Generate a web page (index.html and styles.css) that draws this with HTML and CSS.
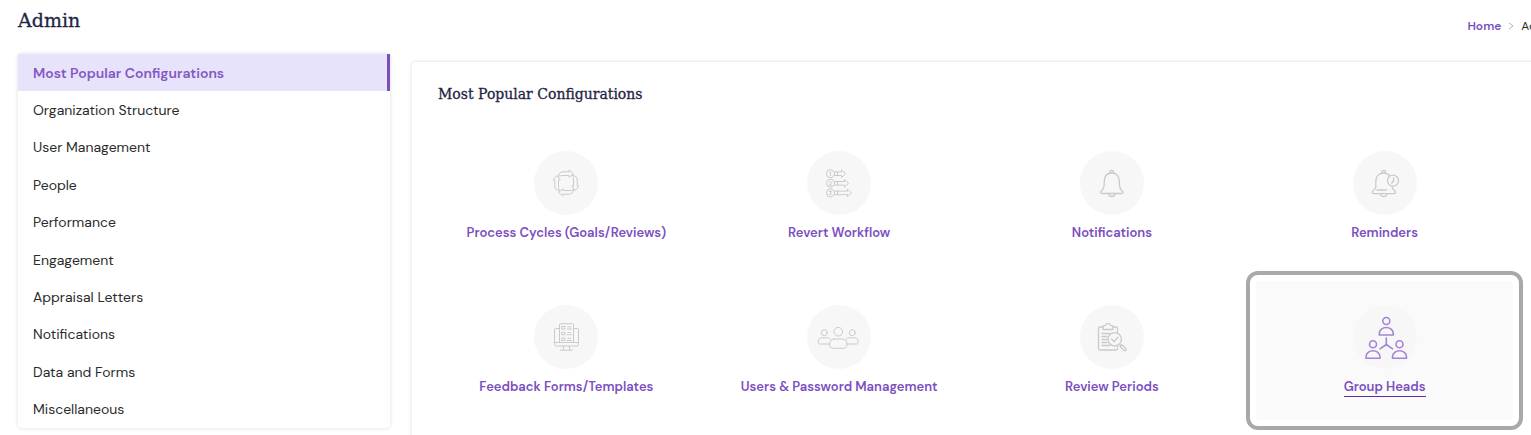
FILE: index.html
```html
<!DOCTYPE html>
<html lang="en">
<head>
    <meta charset="UTF-8">
    <meta name="viewport" content="width=device-width, initial-scale=1.0">
    <title>Admin</title>
    <link rel="stylesheet" href="styles.css">
</head>
<body>
    <div class="page">
        <header class="page-header">
            <h1>Admin</h1>
            <nav class="breadcrumb" aria-label="Breadcrumb">
                <a href="#">Home</a>
                <svg class="breadcrumb-arrow" viewBox="0 0 6 8"><path d="M1 1l4 3-4 3"/></svg>
                <span>Admin</span>
            </nav>
        </header>

        <div class="content">
            <nav class="sidebar" aria-label="Configurations">
                <ul class="menu">
                    <li><a class="active" href="#">Most Popular Configurations</a></li>
                    <li><a href="#">Organization Structure</a></li>
                    <li><a href="#">User Management</a></li>
                    <li><a href="#">People</a></li>
                    <li><a href="#">Performance</a></li>
                    <li><a href="#">Engagement</a></li>
                    <li><a href="#">Appraisal Letters</a></li>
                    <li><a href="#">Notifications</a></li>
                    <li><a href="#">Data and Forms</a></li>
                    <li><a href="#">Miscellaneous</a></li>
                </ul>
            </nav>

            <main class="panel">
                <h2>Most Popular Configurations</h2>

                <div class="tiles">
                    <a class="tile" href="#">
                        <svg class="icon" viewBox="0 0 64 64">
                            <defs>
                                <path id="cycle-arrow" d="M24.500 25c0-2.500 2-4.200 4.500-4.200h6V19l4.500 3.700-4.500 3.600v-1.800h-6c-2 0-2.500.5-4.500.5z"/>
                            </defs>
                            <use href="#cycle-arrow"/>
                            <use href="#cycle-arrow" transform="rotate(90 32 32)"/>
                            <use href="#cycle-arrow" transform="rotate(180 32 32)"/>
                            <use href="#cycle-arrow" transform="rotate(270 32 32)"/>
                        </svg>
                        <span class="label">Process Cycles (Goals/Reviews)</span>
                    </a>

                    <a class="tile" href="#">
                        <svg class="icon" viewBox="0 0 64 64">
                            <circle cx="23.500" cy="22.700" r="4"/>
                            <circle cx="23.500" cy="32.300" r="4"/>
                            <circle cx="23.500" cy="41.900" r="4"/>
                            <path d="M27.500 20.900h7v-2l4 3.800-4 3.800v-2h-7M30.500 21v3.500"/>
                            <path d="M27.500 30.500h10v-2l4 3.800-4 3.800v-2h-10M30.500 30.500v3.600"/>
                            <path d="M27.500 40.100h13v-2l4 3.800-4 3.800v-2h-13M30.500 40.100v3.600"/>
                            <path d="M22.800 21.500l.8-.6v3.600M22.300 31.200c1-1.200 3-.2 1.800 1.200l-1.800 1.800h2.600M22.300 40.300h2.300l-1.200 1.400c2 0 1.600 2.300-1.100 1.800"/>
                        </svg>
                        <span class="label">Revert Workflow</span>
                    </a>

                    <a class="tile" href="#">
                        <svg class="icon icon-bold" viewBox="0 0 64 64">
                            <path d="M30 22c-1-3.500 4.500-3.500 3.500 0"/>
                            <path d="M31.800 22c-5 0-7.500 3.500-7.500 8.500 0 6-.8 7.500-3.300 10-.8.9-.5 2 .7 2h20.200c1.200 0 1.500-1.100.7-2-2.500-2.500-3.300-4-3.300-10 0-5-2.500-8.500-7.500-8.500z"/>
                            <path d="M28.500 42.500c.3 4 6.300 4 6.600 0"/>
                        </svg>
                        <span class="label">Notifications</span>
                    </a>

                    <a class="tile" href="#">
                        <svg class="icon icon-bold" viewBox="0 0 64 64">
                            <path d="M29 22c-1-3.500 4.500-3.500 3.500 0"/>
                            <path d="M36.500 24.500c-1.500-1.600-3.500-2.500-5.700-2.500-5 0-8 3.500-8 8.500V36c0 1.500-.8 2.300-2.300 3.200-1.800 1-1.500 3.500.5 3.500h19.800c2 0 2.300-2.500.5-3.500-1.500-.9-2.300-1.700-2.300-3.500"/>
                            <circle cx="40" cy="29.700" r="5.500"/>
                            <path d="M40.500 27v3l-1.700 2M24 39h9.500M27.500 42.700c.3 3.800 6.300 3.800 6.600 0"/>
                        </svg>
                        <span class="label">Reminders</span>
                    </a>

                    <a class="tile" href="#">
                        <svg class="icon" viewBox="0 0 64 64">
                            <path d="M25.500 23.500H22c-1 0-1.500.5-1.500 1.500v14.500c0 1 .5 1.500 1.500 1.500h21c1 0 1.500-.5 1.500-1.500V25c0-1-.5-1.500-1.500-1.500h-3.500M20.500 37.500h24"/>
                            <path d="M25.500 37.500V20c0-1 .5-1.300 1.300-1.300h11.400c.8 0 1.300.3 1.300 1.300v17.500"/>
                            <path d="M28 21.500h3v2.500h-3zM28 27.300h3v2.500h-3zM28 33h3v2.500h-3zM33 24h4.500M33 29.700h4.500M33 35.500h4.500M34 21.800h2.500M34 27.500h2.500M34 33.300h2.500"/>
                            <path d="M30 41l-1 4M35 41l1 4M26.500 45.200h12"/>
                        </svg>
                        <span class="label">Feedback Forms/Templates</span>
                    </a>

                    <a class="tile" href="#">
                        <svg class="icon" viewBox="0 0 64 64">
                            <circle cx="31.300" cy="26.700" r="4.300"/>
                            <circle cx="17.300" cy="27.700" r="3"/>
                            <circle cx="45.300" cy="27.700" r="3"/>
                            <path d="M27.300 34h8c3.200 0 4.700 2.500 4.700 5.500 0 2.800-1.500 3.800-4 3.800h-9.400c-2.500 0-4-1-4-3.800 0-3 1.500-5.500 4.700-5.500z"/>
                            <path d="M23.500 34.500c-.5-1.200-1.500-1.700-2.700-1.700h-6c-2.200 0-3.500 1.500-3.500 3.500v1c0 1.200.6 1.700 1.700 1.700h9.500M39 34.500c.5-1.200 1.500-1.700 2.700-1.700h6c2.200 0 3.500 1.500 3.500 3.500v1c0 1.200-.6 1.700-1.700 1.700H40"/>
                        </svg>
                        <span class="label">Users &amp; Password Management</span>
                    </a>

                    <a class="tile" href="#">
                        <svg class="icon icon-bold" viewBox="0 0 64 64">
                            <path d="M23 22h-3c-1 0-1.500.5-1.500 1.500v20c0 1 .5 1.500 1.500 1.500h16c1 0 1.500-.5 1.500-1.500V41M37.500 27.500v-4c0-1-.5-1.500-1.500-1.500h-3"/>
                            <path d="M23 24.500v-3c0-1 .7-1.200 2.500-1.200.5-2.300 4.500-2.300 5 0 1.800 0 2.500.2 2.500 1.200v3z"/>
                            <path d="M22 28.500h7.500M22 31.500h5M22 34.500h5M22 37.500h5M22 40.500h8"/>
                            <circle cx="34.700" cy="34.300" r="6.700"/>
                            <path d="M31.500 34l2.500 2.500 4-4.300M39.500 39.200l1 1M40 41.500l1.800-1.800 4 3.700c1.300 1.300-.6 3.200-1.900 1.900z"/>
                        </svg>
                        <span class="label">Review Periods</span>
                    </a>

                    <a class="tile selected" href="#">
                        <svg class="icon" viewBox="0 0 64 64">
                            <circle cx="33.300" cy="16" r="3.500"/>
                            <path d="M26.300 30v-1.200c0-8.400 14-8.400 14 0V30z"/>
                            <circle cx="20" cy="39.300" r="3.500"/>
                            <path d="M13 53.300v-1.200c0-8.400 14-8.400 14 0v1.200z"/>
                            <circle cx="46.500" cy="39.300" r="3.500"/>
                            <path d="M39.500 53.300v-1.200c0-8.400 14-8.400 14 0v1.200z"/>
                            <path d="M33.300 33v6.500L27 43.800M33.300 39.500l6.300 4.300"/>
                        </svg>
                        <span class="label">Group Heads</span>
                    </a>
                </div>
            </main>
        </div>
    </div>
</body>
</html>
```
FILE: styles.css
```css
* {
    margin: 0;
    padding: 0;
    box-sizing: border-box;
}

body {
    font-family: 'DM Sans', Inter, sans-serif;
    font-size: 14px;
    line-height: 20px;
    color: #2b2b2b;
    background: #fff;
    height: 100vh;
    overflow: hidden;
}

a {
    color: inherit;
    text-decoration: none;
}

h1,
h2 {
    font-family: 'Roboto Slab', 'DejaVu Serif', serif;
    font-weight: 400;
    color: #1f2544;
    -webkit-text-stroke: 0.3px #1f2544;
}

h1 {
    font-size: 19px;
    line-height: 40px;
}

h2 {
    font-size: 14px;
    line-height: 20px;
    margin-bottom: 23px;
}

/* the page runs wider than the window on the right */
.page {
    margin-right: -26px;
    padding-left: 18px;
}

.page-header {
    display: flex;
    justify-content: space-between;
    height: 54px;
}

.breadcrumb {
    display: flex;
    align-items: center;
    gap: 7px;
    height: 52px;
    font-size: 12px;
}

.breadcrumb a {
    font-weight: 600;
    color: #7b4fbf;
}

.breadcrumb-arrow {
    width: 6px;
    height: 8px;
    fill: none;
    stroke: #b5b5b5;
}

.content {
    display: flex;
    align-items: flex-start;
    gap: 22px;
}

.sidebar {
    flex: 0 0 372px;
    border-radius: 4px;
    box-shadow: 0 0 4px rgba(0, 0, 0, 0.15);
}

.menu {
    display: grid;
    grid-auto-rows: 1fr;
    min-height: 374px;
    list-style: none;
}

.menu a {
    display: flex;
    align-items: center;
    height: 100%;
    padding: 0 15px;
}

.menu .active {
    font-weight: 600;
    color: #8458c4;
    background: #e6e3fa;
    border-right: 3px solid #7b4fb5;
}

.panel {
    flex: 1;
    margin-top: 8px;
    padding: 22px 44px 22px 26px;
    border-radius: 4px;
    box-shadow: 0 0 4px rgba(0, 0, 0, 0.15);
}

.tiles {
    display: grid;
    grid-template-columns: repeat(4, 1fr);
    gap: 15px 16px;
}

.tile {
    position: relative;
    display: flex;
    flex-direction: column;
    align-items: center;
    gap: 8px;
    padding: 24px 0 23px;
    border-radius: 4px;
}

.icon {
    width: 64px;
    height: 64px;
    border-radius: 50%;
    background: #f7f7f7;
    fill: none;
    stroke: #cacaca;
    stroke-width: 1;
    stroke-linejoin: round;
    stroke-linecap: round;
}

.icon-bold {
    stroke-width: 1.3;
}

.label {
    font-size: 13px;
    font-weight: 600;
    line-height: 19px;
    color: #7b4fbf;
    border-bottom: 1px solid transparent;
}

.selected {
    background: #fafafa;
}

.selected .icon {
    stroke: #a584d6;
    stroke-width: 1.6;
}

.selected .label {
    border-color: #5c2d9c;
}

/* focus frame around the selected tile */
.selected::after {
    content: "";
    position: absolute;
    inset: -10px;
    border: 4px solid #a9a9a9;
    border-radius: 12px;
}
```
